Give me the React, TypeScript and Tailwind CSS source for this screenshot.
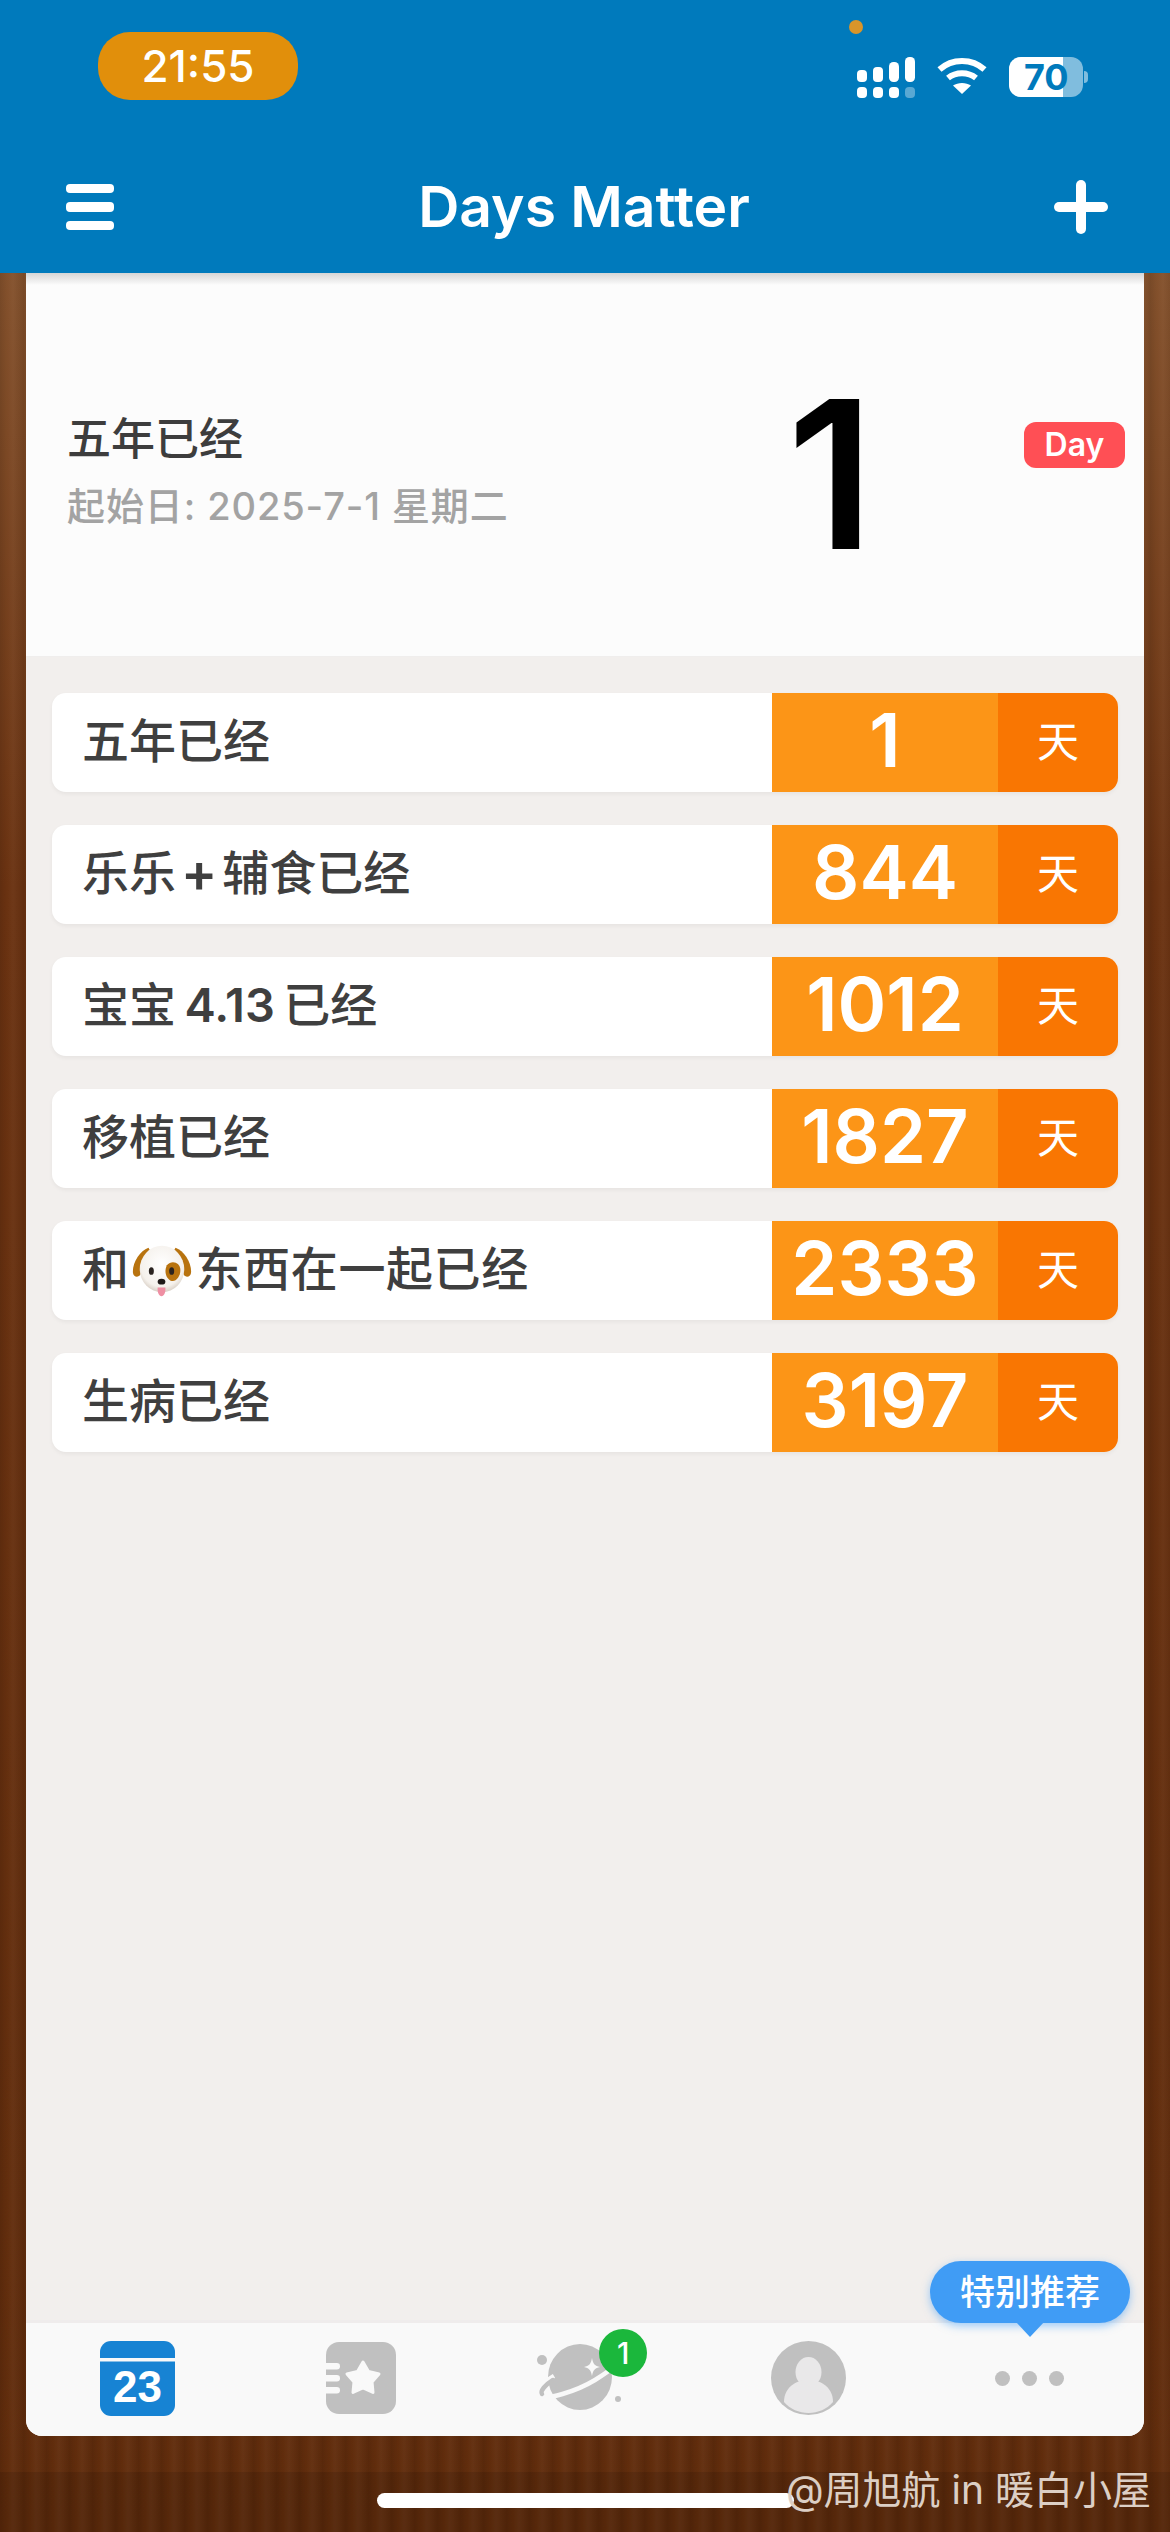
import React from 'react';

const rows: { title: React.ReactNode; days: number }[] = [
  { title: '五年已经', days: 1 },
  {
    title: (
      <span className="flex items-center">
        乐乐<span className="mx-[5px] text-[54px] leading-none font-semibold">+</span>辅食已经
      </span>
    ),
    days: 844,
  },
  {
    title: (
      <span className="[word-spacing:-4px]">
        宝宝 <span className="font-semibold">4.13</span> 已经
      </span>
    ),
    days: 1012,
  },
  { title: '移植已经', days: 1827 },
  { title: <DogTitle />, days: 2333 },
  { title: '生病已经', days: 3197 },
];

function DogTitle() {
  return (
    <span className="flex items-center tracking-[0.6px]">
      和
      <DogEmoji />
      东西在一起已经
    </span>
  );
}

function DogEmoji() {
  return (
    <svg width="60" height="54" viewBox="0 0 62 54" className="ml-[2px] mr-[4px] mt-[3px] shrink-0">
      <defs>
        <radialGradient id="dogHead" cx="50%" cy="40%" r="60%">
          <stop offset="0%" stopColor="#ffffff" />
          <stop offset="80%" stopColor="#f5f1ec" />
          <stop offset="100%" stopColor="#d9d0c6" />
        </radialGradient>
      </defs>
      <path d="M17 3C8 6 0 19 1 29c1 5 6 5 8 1l11-22z" fill="#b8730f" />
      <path d="M45 3c9 3 17 16 16 26-1 5-6 5-8 1L42 8z" fill="#b8730f" />
      <ellipse cx="31" cy="25" rx="23" ry="24" fill="url(#dogHead)" />
      <path d="M36 21c5-6 14-3 14 5 0 7-5 13-10 11-5-2-7-10-4-16z" fill="#b8730f" />
      <ellipse cx="20" cy="27" rx="2.6" ry="4" fill="#2a2320" />
      <ellipse cx="41" cy="27" rx="2.6" ry="4" fill="#2a2320" />
      <ellipse cx="30.500" cy="38" rx="4" ry="3" fill="#1f1a18" />
      <path d="M26.500 44h8c.5 5-1.500 9-4 9s-4.500-4-4-9z" fill="#ef8fa3" />
    </svg>
  );
}

function SignalIcon() {
  return (
    <svg width="58" height="41" viewBox="0 0 58 41" fill="#fff">
      <rect x="0" y="13" width="10" height="12" rx="4" />
      <rect x="16" y="10" width="10" height="15" rx="4" />
      <rect x="32" y="5" width="10" height="20" rx="4.500" />
      <rect x="48" y="0" width="10" height="25" rx="4.500" />
      <rect x="0" y="30" width="10" height="11" rx="4" />
      <rect x="16" y="30" width="10" height="11" rx="4" />
      <rect x="32" y="30" width="10" height="11" rx="4" />
      <rect x="48" y="30" width="10" height="11" rx="4" fill="#fff" fillOpacity="0.35" />
    </svg>
  );
}

function WifiIcon() {
  return (
    <svg width="50" height="37" viewBox="0 0 50 37" fill="none" stroke="#fff" strokeWidth="6">
      <path d="M2.500 12.500C15 1 35 1 47.500 12.500" />
      <path d="M11 21c8-6.500 20-6.500 28 0" />
      <path d="M25 37l-9-8.500c5-3.500 13-3.500 18 0z" fill="#fff" stroke="none" />
    </svg>
  );
}

function CalendarIcon() {
  return (
    <svg width="75" height="75" viewBox="0 0 75 75">
      <rect width="75" height="75" rx="11" fill="#1783d3" />
      <rect y="17" width="75" height="3.500" fill="#f9f9f9" />
      <text
        x="37.500"
        y="61"
        textAnchor="middle"
        fontSize="44"
        fontWeight="700"
        fill="#fff"
        fontFamily="Liberation Sans"
      >
        23
      </text>
    </svg>
  );
}

function NotebookIcon() {
  return (
    <svg width="70" height="72" viewBox="0 0 70 72">
      <rect width="70" height="72" rx="13" fill="#c0c0c0" />
      <rect x="-6" y="21" width="20" height="6.500" rx="3.200" fill="#f9f9f9" />
      <rect x="-6" y="33" width="20" height="6.500" rx="3.200" fill="#f9f9f9" />
      <rect x="-6" y="45" width="20" height="6.500" rx="3.200" fill="#f9f9f9" />
      <path
        d="M37 20l5.500 9.500 10.500 2.500-7 8 1 10.500-10-4.500-10 4.500 1-10.500-7-8 10.500-2.500z"
        fill="#f9f9f9"
        stroke="#f9f9f9"
        strokeWidth="3"
        strokeLinejoin="round"
      />
    </svg>
  );
}

function PlanetIcon() {
  return (
    <svg width="90" height="70" viewBox="0 0 90 70">
      <circle cx="6" cy="17" r="5" fill="#c0c0c0" />
      <circle cx="82" cy="56" r="3" fill="#c0c0c0" />
      <ellipse cx="44" cy="34" rx="32" ry="33" fill="#c0c0c0" />
      <path d="M18 33C6 40-1 49 3 53c6 5 38-5 56-16 8-5 14-9 20-14" fill="none" stroke="#f9f9f9" strokeWidth="4.500" />
      <path d="M17 37C9 42 4 48 6 51" fill="none" stroke="#c0c0c0" strokeWidth="4.500" strokeLinecap="round" />
      <path d="M56 15c1 6 3 8 8 9-5 1-7 3-8 9-1-6-3-8-8-9 5-1 7-3 8-9z" fill="#f9f9f9" />
    </svg>
  );
}

function AvatarIcon() {
  return (
    <svg width="75" height="74" viewBox="0 0 75 74">
      <ellipse cx="37.500" cy="37" rx="37.500" ry="37" fill="#c0c0c0" />
      <ellipse cx="37.500" cy="31" rx="13" ry="15" fill="#e9e8e9" />
      <path d="M13 61c0-14 11-22 24.500-22S62 47 62 61c-6 7-15 11-24.500 11S19 68 13 61z" fill="#e9e8e9" />
    </svg>
  );
}

export default function App() {
  return (
    <div className="relative w-[1170px] h-[2532px] flex flex-col overflow-hidden [font-family:Inter,'Noto_Sans_CJK_SC',sans-serif] bg-[repeating-linear-gradient(90deg,rgba(0,0,0,0.09)_0px,rgba(0,0,0,0)_7px,rgba(255,255,255,0.03)_13px,rgba(0,0,0,0.07)_23px),linear-gradient(to_bottom,#8f5f38,#6a3211_35%,#602c0c)]">
      {/* Header */}
      <header className="h-[273px] shrink-0 bg-[#007abc] relative z-10 flex flex-col">
        <div className="h-[112px] flex items-start justify-between pl-[98px] pr-[82px]">
          <div className="mt-[32px] w-[200px] h-[68px] rounded-[32px] bg-[#e18f0b] flex items-center justify-center text-white text-[44px] leading-none font-medium">
            21:55
          </div>
          <div className="relative flex items-start gap-[22px] mt-[57px]">
            <span className="absolute -left-[8px] -top-[37px] w-[14px] h-[14px] rounded-full bg-[#d9952a]" />
            <SignalIcon />
            <WifiIcon />
            <div className="flex items-center">
              <div className="relative w-[74px] h-[40px] rounded-[12px] bg-white/50">
                <div className="absolute inset-y-0 left-0 w-[54px] rounded-l-[12px] bg-white" />
                <span className="absolute left-[15px] top-[2px] text-[36px] leading-[36px] font-bold text-[#007abc]">
                  70
                </span>
              </div>
              <span className="w-[4px] h-[12px] rounded-r-full bg-white/50 ml-[1px]" />
            </div>
          </div>
        </div>
        <div className="flex-1 flex items-start justify-between pl-[66px] pr-[62px] pt-[68px]">
          <div className="w-[48px] flex flex-col gap-[9px] mt-[4px]">
            <span className="h-[9px] rounded-[4px] bg-white" />
            <span className="h-[10px] rounded-[4px] bg-white" />
            <span className="h-[9px] rounded-[4px] bg-white" />
          </div>
          <h1 className="text-white text-[57px] leading-[70px] font-semibold -mt-[8px]">Days Matter</h1>
          <div className="relative w-[54px] h-[54px]">
            <span className="absolute left-[22px] top-0 w-[10px] h-[54px] rounded-full bg-white" />
            <span className="absolute left-0 top-[22px] w-[54px] h-[10px] rounded-full bg-white" />
          </div>
        </div>
      </header>

      {/* Panel */}
      <main className="mx-[26px] h-[2163px] shrink-0 flex flex-col rounded-b-[16px] overflow-hidden bg-[#f2efed] relative">
        <section className="relative h-[384px] shrink-0 bg-[#fcfcfc] border-b border-[#f0eeed] flex items-center pt-[18px] pl-[41px] pr-[19px]">
          <div className="absolute inset-x-0 top-0 h-[12px] bg-gradient-to-b from-[#d5d5d5] to-[#fcfcfc]" />
          <div className="flex-1 flex flex-col">
            <div className="text-[44px] leading-[52px] -mt-[6px] font-medium text-[#3d3d3d]">五年已经</div>
            <div className="mt-[19px] text-[38px] leading-[44px] tracking-[0.9px] font-medium text-[#a3a3a3]">起始日: 2025-7-1 星期二</div>
          </div>
          <div className="w-[237px] text-black text-[206px] leading-[206px] font-semibold">1</div>
          <div className="w-[101px] h-[46px] -mt-[58px] rounded-[12px] bg-[#ff4f55] flex items-center justify-center text-white text-[32px] leading-none font-semibold">
            Day
          </div>
        </section>

        <section className="flex-1 flex flex-col gap-[33px] pt-[36px] px-[26px]">
          {rows.map((row) => (
            <div key={row.days} className="h-[99px] flex rounded-[14px] overflow-hidden bg-white shadow-[0_2px_4px_rgba(0,0,0,0.05)]">
              <div className="flex-1 flex items-center pl-[30px] pb-[3px] text-[47px] font-medium text-[#3f3f3f]">{row.title}</div>
              <div className="w-[226px] bg-[#fc9517] flex items-center justify-center pb-[5px] text-white text-[74px] font-semibold leading-none">
                {row.days}
              </div>
              <div className="w-[120px] bg-[#f97602] flex items-center justify-center pb-[2px] text-white text-[42px]">天</div>
            </div>
          ))}
        </section>

        {/* Tab bar */}
        <nav className="h-[116px] shrink-0 bg-[#f9f9f9] border-t-[3px] border-[#efecec] grid grid-cols-5 items-center pb-[3px]">
          <div className="flex justify-center"><CalendarIcon /></div>
          <div className="flex justify-center"><NotebookIcon /></div>
          <div className="flex justify-center relative -ml-[8px]">
            <PlanetIcon />
            <span className="absolute left-[134px] -top-[14px] w-[48px] h-[48px] rounded-full bg-[#1bb73c] flex items-center justify-center text-white text-[30px] font-medium">1</span>
          </div>
          <div className="flex justify-center"><AvatarIcon /></div>
          <div className="flex justify-center gap-[12px] -ml-[6px]">
            <span className="w-[15px] h-[15px] rounded-full bg-[#c0c0c0]" />
            <span className="w-[15px] h-[15px] rounded-full bg-[#c0c0c0]" />
            <span className="w-[15px] h-[15px] rounded-full bg-[#c0c0c0]" />
          </div>
        </nav>

        {/* Tooltip */}
        <div className="absolute right-[14px] bottom-[113px] w-[200px] h-[62px] rounded-[31px] bg-[#409cf5] flex items-center justify-center text-white text-[35px] font-medium shadow-[0_3px_8px_rgba(64,156,245,0.5)]">
          特别推荐
          <span className="absolute left-[85px] top-[60px] w-0 h-0 border-x-[15px] border-x-transparent border-t-[16px] border-t-[#409cf5]" />
        </div>
      </main>

      {/* Bottom strip */}
      <div className="flex-1 flex flex-col">
        <div className="h-[36px] shrink-0" />
        <div className="flex-1 bg-black/10 pt-[21px] pl-[377px]">
          <div className="w-[417px] h-[15px] rounded-full bg-white" />
        </div>
      </div>

      <div className="absolute right-[19px] bottom-[19px] text-[39px] leading-[46px] text-[#dccfc5] whitespace-nowrap">@周旭航 in 暖白小屋</div>
    </div>
  );
}
